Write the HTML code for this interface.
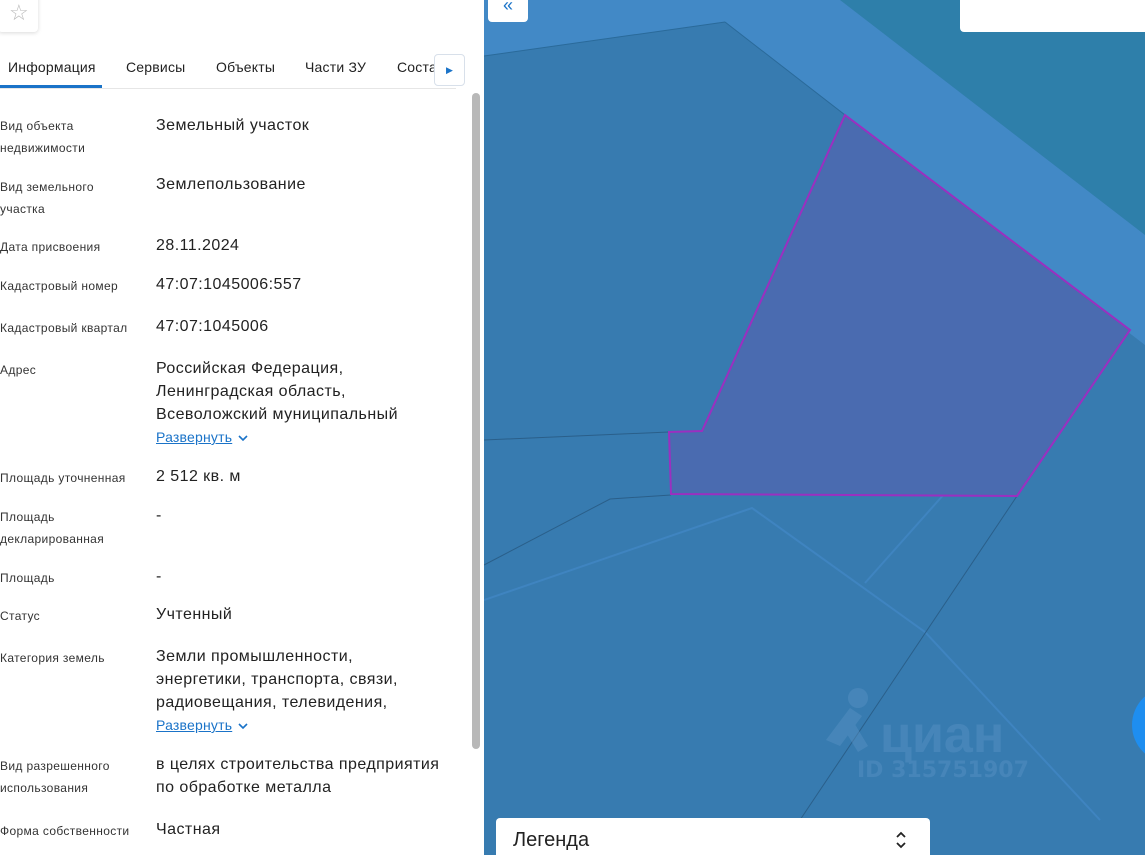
<!DOCTYPE html><html><head><meta charset="utf-8"><style>
body{margin:0;width:1145px;height:855px;overflow:hidden;font-family:"Liberation Sans",sans-serif;position:relative;background:#fff}
.left{position:absolute;left:0;top:0;width:484px;height:855px;background:#fff}
.row{position:absolute;left:0;width:470px}
.lab{position:absolute;left:0;font-size:12px;color:#333;line-height:22px;width:150px;letter-spacing:.35px}
.val{position:absolute;left:156px;font-size:16px;color:#222;line-height:23px;width:310px;letter-spacing:.45px}
.exp{color:#1a73c8;font-size:14px;text-decoration:underline;letter-spacing:.2px}
.tab{position:absolute;top:59px;font-size:14px;color:#222;letter-spacing:.2px}
</style></head><body>
<div class="left">
<div style="position:absolute;left:-2px;top:-10px;width:40px;height:42px;border-radius:4px;box-shadow:0 1px 4px rgba(0,0,0,.15);background:#fff"></div>
<div style="position:absolute;left:9px;top:0;font-size:22px;color:#bbb">☆</div>
<div class="tab" style="left:8px">Информация</div>
<div class="tab" style="left:126px">Сервисы</div>
<div class="tab" style="left:216px">Объекты</div>
<div class="tab" style="left:305px">Части ЗУ</div>
<div class="tab" style="left:397px">Соста</div>
<div style="position:absolute;left:0;top:85px;width:102px;height:3px;background:#1a73c8"></div>
<div style="position:absolute;left:0;top:88px;width:456px;height:1px;background:#e6e6e6"></div>
<div style="position:absolute;left:434px;top:54px;width:29px;height:30px;border:1px solid #d8e0ea;border-radius:4px;background:#fff;color:#1a73c8;font-size:9px;text-align:center;line-height:30px">▶</div>
<div style="position:absolute;left:472px;top:93px;width:8px;height:656px;border-radius:4px;background:#b8b8b8"></div>
<div class="row" style="top:115px"><div class="lab">Вид объекта<br>недвижимости</div><div class="val" style="top:-1px">Земельный участок</div></div>
<div class="row" style="top:176px"><div class="lab">Вид земельного<br>участка</div><div class="val" style="top:-3px">Землепользование</div></div>
<div class="row" style="top:236px"><div class="lab">Дата присвоения</div><div class="val" style="top:-2px">28.11.2024</div></div>
<div class="row" style="top:275px"><div class="lab">Кадастровый номер</div><div class="val" style="top:-2px">47:07:1045006:557</div></div>
<div class="row" style="top:317px"><div class="lab">Кадастровый квартал</div><div class="val" style="top:-2px">47:07:1045006</div></div>
<div class="row" style="top:359px"><div class="lab">Адрес</div><div class="val" style="top:-2px">Российская Федерация,<br>Ленинградская область,<br>Всеволожский муниципальный<br><span class="exp">Развернуть</span> <svg width="12" height="8" viewBox="0 0 12 8"><path d="M2 2l4 4 4-4" stroke="#1a73c8" stroke-width="1.6" fill="none"/></svg></div></div>
<div class="row" style="top:467px"><div class="lab">Площадь уточненная</div><div class="val" style="top:-2px">2 512 кв. м</div></div>
<div class="row" style="top:506px"><div class="lab">Площадь<br>декларированная</div><div class="val" style="top:-2px">-</div></div>
<div class="row" style="top:567px"><div class="lab">Площадь</div><div class="val" style="top:-2px">-</div></div>
<div class="row" style="top:605px"><div class="lab">Статус</div><div class="val" style="top:-2px">Учтенный</div></div>
<div class="row" style="top:647px"><div class="lab">Категория земель</div><div class="val" style="top:-2px">Земли промышленности,<br>энергетики, транспорта, связи,<br>радиовещания, телевидения,<br><span class="exp">Развернуть</span> <svg width="12" height="8" viewBox="0 0 12 8"><path d="M2 2l4 4 4-4" stroke="#1a73c8" stroke-width="1.6" fill="none"/></svg></div></div>
<div class="row" style="top:755px"><div class="lab">Вид разрешенного<br>использования</div><div class="val" style="top:-2px">в целях строительства предприятия<br>по обработке металла</div></div>
<div class="row" style="top:820px"><div class="lab">Форма собственности</div><div class="val" style="top:-2px">Частная</div></div>
</div>
<svg style="position:absolute;left:484px;top:0" width="661" height="855" viewBox="484 0 661 855">
<rect x="484" y="0" width="661" height="855" fill="#377bb0"/>
<polygon points="840,0 1145,0 1145,235" fill="#2e7faa"/>
<polygon points="484,0 840,0 1145,235 1145,345 725,22 484,56" fill="#4289c6"/>
<line x1="484" y1="56" x2="725" y2="22" stroke="#2a6a9a"/>
<line x1="725" y1="22" x2="845" y2="115" stroke="#2a6a9a"/>
<polyline points="484,440 669,432" stroke="#2a5f8a" fill="none"/>
<polyline points="484,565 610,499 671,495" stroke="#2a5f8a" fill="none"/>
<polyline points="484,600 752,508 925,632 1100,820" stroke="#3f84c0" stroke-width="2" fill="none"/>
<line x1="865" y1="583" x2="1010" y2="420" stroke="#3f84c0" stroke-width="2"/>
<line x1="1017" y1="496" x2="800" y2="820" stroke="#2a5f8a"/>
<polygon points="845,115 1130,330 1017,496 671,494 669,432 702,431" fill="#4a6bb0" stroke="#9b2fc0" stroke-width="2"/>
<g fill="#5a93c4" opacity=".45">
<circle cx="858" cy="698" r="10"/><path d="M826 740l24-32 12 8-22 30z M850 716l18 30-10 6-16-26z"/>
<text x="880" y="752" font-family="Liberation Sans,sans-serif" font-weight="bold" font-size="52">циан</text>
<text x="857" y="777" font-family="DejaVu Sans,sans-serif" font-weight="bold" font-size="22">ID 315751907</text>
</g>
<circle cx="1170" cy="725" r="38" fill="#1e8ef0"/>
</svg>
<div style="position:absolute;left:488px;top:-8px;width:40px;height:30px;background:#fff;border-radius:4px;color:#1a73c8;font-size:18px;text-align:center;line-height:26px">«</div>
<div style="position:absolute;left:960px;top:-6px;width:190px;height:38px;background:#fff;border-radius:4px"></div>
<div style="position:absolute;left:496px;top:818px;width:434px;height:45px;background:#fff;border-radius:4px"></div>
<div style="position:absolute;left:513px;top:829px;font-size:20px;color:#222">Легенда</div>
<svg style="position:absolute;left:894px;top:830px" width="14" height="20" viewBox="0 0 14 20"><path d="M3 7l4-4 4 4M3 13l4 4 4-4" stroke="#222" stroke-width="1.8" fill="none"/></svg>
</body></html>
